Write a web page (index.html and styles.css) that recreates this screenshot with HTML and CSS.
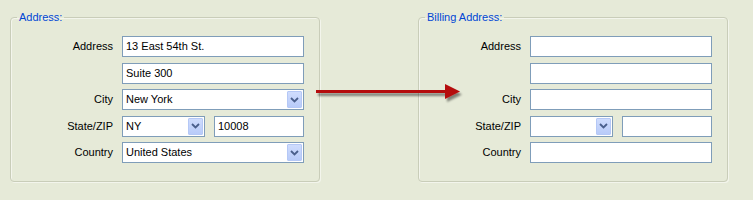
FILE: index.html
```html
<!DOCTYPE html>
<html>
<head>
<meta charset="utf-8">
<link rel="stylesheet" href="styles.css">
</head>
<body>
<div class="page">
  <fieldset class="group">
    <legend>Address:</legend>
    <div class="form">
      <div class="label">Address</div>
      <div class="input">13 East 54th St.</div>
      <div class="label"></div>
      <div class="input">Suite 300</div>
      <div class="label">City</div>
      <div class="select"><span class="val">New York</span><span class="btn"><svg viewBox="0 0 9 6" width="9" height="6"><path d="M1 1 L4.5 4.5 L8 1" fill="none" stroke="#4a5f8c" stroke-width="1.8"/></svg></span></div>
      <div class="label">State/ZIP</div>
      <div class="pair">
        <div class="select state"><span class="val">NY</span><span class="btn"><svg viewBox="0 0 9 6" width="9" height="6"><path d="M1 1 L4.5 4.5 L8 1" fill="none" stroke="#4a5f8c" stroke-width="1.8"/></svg></span></div>
        <div class="input zip">10008</div>
      </div>
      <div class="label">Country</div>
      <div class="select"><span class="val">United States</span><span class="btn"><svg viewBox="0 0 9 6" width="9" height="6"><path d="M1 1 L4.5 4.5 L8 1" fill="none" stroke="#4a5f8c" stroke-width="1.8"/></svg></span></div>
    </div>
  </fieldset>
  <fieldset class="group">
    <legend>Billing Address:</legend>
    <div class="form">
      <div class="label">Address</div>
      <div class="input"></div>
      <div class="label"></div>
      <div class="input"></div>
      <div class="label">City</div>
      <div class="input"></div>
      <div class="label">State/ZIP</div>
      <div class="pair">
        <div class="select state"><span class="val"></span><span class="btn"><svg viewBox="0 0 9 6" width="9" height="6"><path d="M1 1 L4.5 4.5 L8 1" fill="none" stroke="#4a5f8c" stroke-width="1.8"/></svg></span></div>
        <div class="input zip"></div>
      </div>
      <div class="label">Country</div>
      <div class="input"></div>
    </div>
  </fieldset>
  <svg class="arrow" viewBox="0 0 156 26" width="156" height="26">
    <defs>
      <filter id="sh" x="-10%" y="-50%" width="120%" height="200%">
        <feGaussianBlur in="SourceAlpha" stdDeviation="1.3"/>
        <feOffset dx="2" dy="3" result="b"/>
        <feComponentTransfer><feFuncA type="linear" slope="0.45"/></feComponentTransfer>
        <feMerge><feMergeNode/><feMergeNode in="SourceGraphic"/></feMerge>
      </filter>
    </defs>
    <g filter="url(#sh)">
      <rect x="4" y="10" width="131" height="3" fill="#b50c0c"/>
      <path d="M133 4 L148 11.5 L133 19 Z" fill="#b50c0c"/>
    </g>
  </svg>
</div>
</body>
</html>
```
FILE: styles.css
```css
html, body {
  margin: 0;
  padding: 0;
  background: #e6ead8;
}
body {
  font-family: "Liberation Sans", Arial, sans-serif;
  font-size: 11px;
  color: #000;
}
.page {
  position: relative;
  display: flex;
  gap: 98px;
  padding: 11px 0 0 10px;
  height: 200px;
  box-sizing: border-box;
}
.group {
  margin: 0;
  width: 310px;
  box-sizing: border-box;
  min-width: 0;
  padding: 12px 15px 18px 0;
  border: 1px solid #c9cdb9;
  border-radius: 4px;
  box-shadow: 1px 1px 0 #f3f5ec, inset 1px 1px 0 #f3f5ec;
  align-self: flex-start;
}
.group legend {
  margin-left: 6px;
  padding: 0 2px;
  font-size: 11px;
  line-height: 13px;
  color: #0046d5;
}
.form {
  display: grid;
  grid-template-columns: 102px 182px;
  grid-auto-rows: 21px;
  column-gap: 9px;
  row-gap: 5.5px;
}
.label {
  text-align: right;
  align-self: center;
  line-height: 13px;
}
.input, .select {
  box-sizing: border-box;
  height: 21px;
  border: 1px solid #7f9db9;
  background: #fff;
  line-height: 19px;
  padding-left: 3px;
  white-space: nowrap;
  overflow: hidden;
}
.select {
  display: flex;
  align-items: stretch;
  padding: 0 1px 0 3px;
}
.select .val {
  flex: 1;
}
.select .btn {
  width: 15px;
  margin: 1px 0;
  box-sizing: border-box;
  border: 1px solid #b5c8f6;
  border-radius: 1px;
  background: linear-gradient(#cfdcfd, #b8cbf9);
  display: flex;
  align-items: center;
  justify-content: center;
}
.select .btn svg {
  display: block;
}
.pair {
  display: flex;
  gap: 9px;
}
.pair .state {
  width: 83px;
}
.pair .zip {
  flex: 1;
}
.arrow {
  position: absolute;
  left: 312px;
  top: 80px;
}
```
